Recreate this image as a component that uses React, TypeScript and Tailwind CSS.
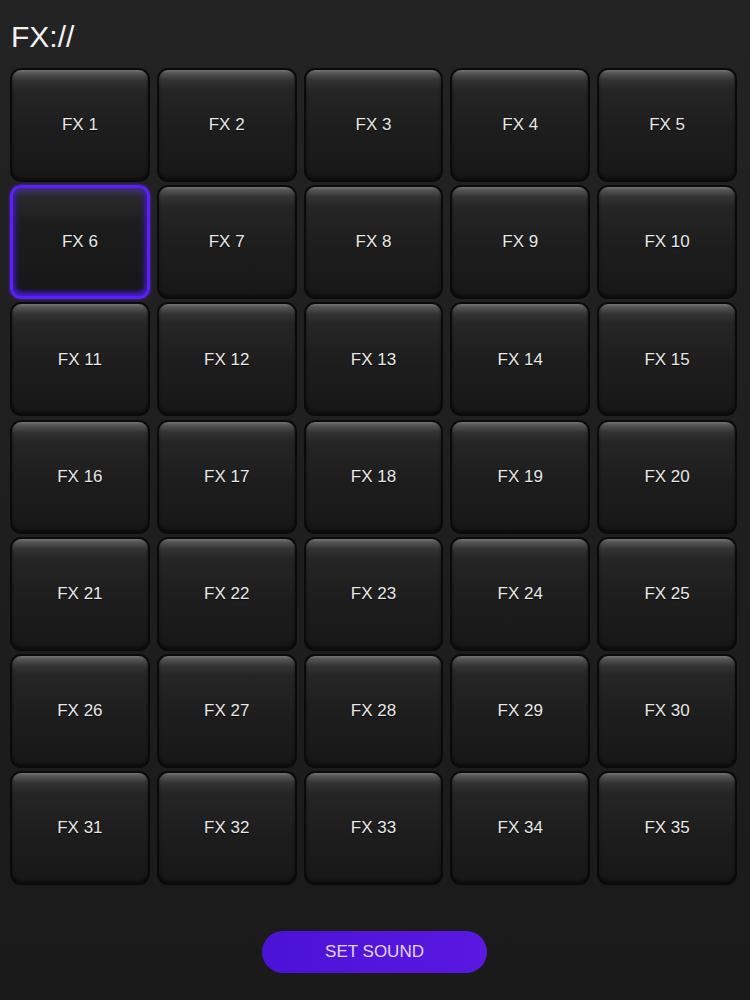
import React from "react";

const pads = Array.from({ length: 35 }, (_, i) => `FX ${i + 1}`);

function Pad({ label, selected }: { label: string; selected?: boolean }) {
  return (
    <button
      className={
        "h-[114px] rounded-[11px] flex items-center justify-center text-[17px] text-[#e8e8e8] " +
        (selected
          ? "border-[3px] border-[#5a22f2] shadow-[inset_0_0_9px_#4a18dc,inset_0_-3px_4px_#4a18dc,0_0_3px_#5a22f2] bg-[linear-gradient(to_bottom,#3c3c3c_0px,#2a2a2a_8px,#1c1c1c_35%,#171717_100%)]"
          : "border-2 border-[#0a0a0a] bg-[linear-gradient(to_bottom,#777777_0px,#555555_3px,#333333_10px,#252525_20px,#1d1d1d_55%,#171717_100%)] shadow-[inset_0_-2px_3px_rgba(0,0,0,0.5)]")
      }
    >
      <span className="[text-shadow:0_1px_1px_rgba(0,0,0,0.8)]">{label}</span>
    </button>
  );
}

export default function App() {
  return (
    <div className="w-[750px] h-[1000px] bg-[linear-gradient(to_bottom,#232323,#1a1a1a)] font-['Liberation_Sans',Arial,sans-serif] flex flex-col">
      <h1 className="pl-[11px] pt-[19px] text-[30px] leading-[36px] text-[#f2f2f2]">FX://</h1>
      <div className="mt-[13px] ml-[10px] w-[727px] grid grid-cols-5 gap-x-[7px] gap-y-[3.2px]">
        {pads.map((p, i) => (
          <Pad key={p} label={p} selected={i === 5} />
        ))}
      </div>
      <div className="mt-[46px] flex justify-center">
        <button className="ml-[-1px] w-[225px] h-[42px] rounded-full bg-[linear-gradient(to_right,#4a13d6,#5a18e2)] text-[17px] text-[#e2d6ff]">
          SET SOUND
        </button>
      </div>
    </div>
  );
}
